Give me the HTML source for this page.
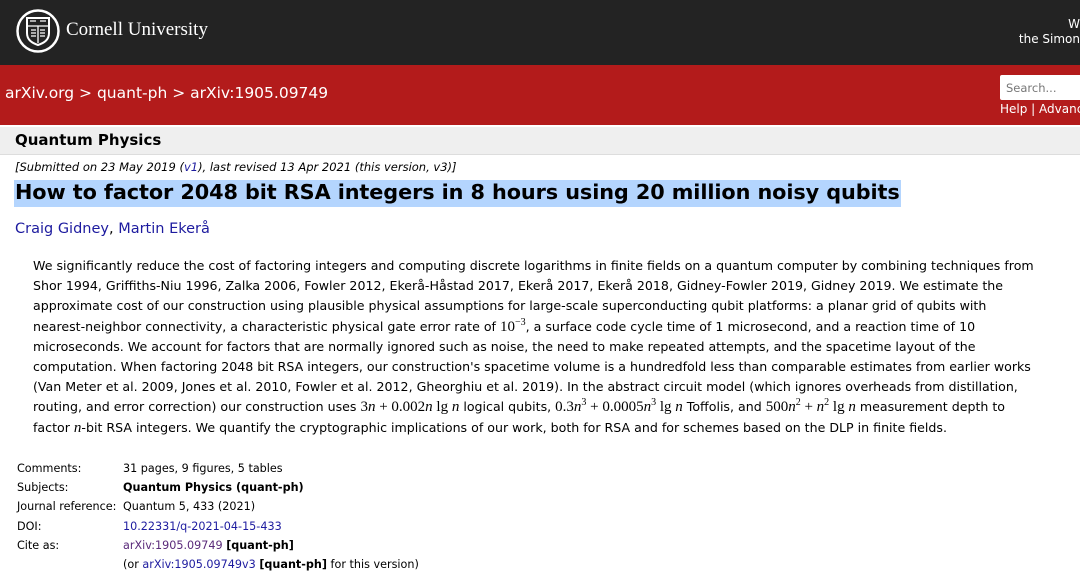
<!DOCTYPE html>
<html><head><meta charset="utf-8"><style>
body{margin:0;width:1080px;height:586px;overflow:hidden;background:#fff;font-family:"DejaVu Sans","Liberation Sans",sans-serif;color:#000}
.top{position:absolute;left:0;top:0;width:1080px;height:65px;background:#232323}
.red{position:absolute;left:0;top:65px;width:1080px;height:60px;background:#b31b1b}
.crumb{position:absolute;left:5px;top:84px;color:#fff;font-size:15.5px}
.qp{position:absolute;left:0;top:127px;width:1080px;height:27px;background:#efefef;border-bottom:1px solid #ddd}
.qp span{position:absolute;left:15px;top:4px;font-weight:bold;font-size:15px}
.ab{position:absolute;left:33px;top:256px;font-size:12.6px;line-height:20.2px;white-space:nowrap}
.m{font-family:'Liberation Serif',serif;font-size:15px;line-height:0}
sup{font-size:10px;line-height:0;vertical-align:0;position:relative;top:-6px}
a{color:#1d1b9f;text-decoration:none}
.meta{position:absolute;left:17px;top:459px;font-size:11.2px;line-height:19.2px}
.meta td{padding:0;vertical-align:top}
</style></head><body>
<div class="top">
<svg style="position:absolute;left:15px;top:8px" width="46" height="46" viewBox="0 0 46 46"><circle cx="23" cy="23" r="20.5" fill="none" stroke="#fff" stroke-width="2.5"/><path d="M12 10h22v15c0 7-5 10-11 12-6-2-11-5-11-12z" fill="none" stroke="#fff" stroke-width="2"/><path d="M12 18h22M23 18v17M15 13h6M25 13h6M16 22h5M16 25h5M16 28h5M25 22h5M25 25h5M25 28h5" stroke="#fff" stroke-width="1.3"/></svg>
<div style="position:absolute;left:66px;top:19px;color:#fff;font-family:'Liberation Serif',serif;font-size:19px">Cornell University</div>
<div style="position:absolute;right:0;top:17px;color:#fff;font-size:12px;text-align:right;line-height:15px;white-space:nowrap">W<br>the Simon</div>
</div>
<div class="red"></div>
<div class="crumb">arXiv.org &gt; quant-ph &gt; arXiv:1905.09749</div>
<div style="position:absolute;left:1000px;top:75px;width:90px;height:25px;background:#fff;border-radius:2px"><span style="position:absolute;left:6px;top:6px;font-size:11.5px;color:#777">Search...</span></div>
<div style="position:absolute;left:1000px;top:102px;color:#fff;font-size:12px;white-space:nowrap">Help | Advanced</div>
<div class="qp"><span>Quantum Physics</span></div>
<div style="position:absolute;left:15px;top:160px;font-size:11.5px;font-style:italic">[Submitted on 23 May 2019 (<a href="#">v1</a>), last revised 13 Apr 2021 (this version, v3)]</div>
<div style="position:absolute;left:14px;top:180px;height:27px;width:887px;background:#b4d5fe"></div>
<div style="position:absolute;left:15px;top:180px;font-size:20.8px;font-weight:bold;white-space:nowrap;letter-spacing:-0.1px">How to factor 2048 bit RSA integers in 8 hours using 20 million noisy qubits</div>
<div style="position:absolute;left:15px;top:221px;font-size:14.5px"><a href="#">Craig Gidney</a>, <a href="#">Martin Ekerå</a></div>
<div class="ab">We significantly reduce the cost of factoring integers and computing discrete logarithms in finite fields on a quantum computer by combining techniques from<br>Shor 1994, Griffiths-Niu 1996, Zalka 2006, Fowler 2012, Ekerå-Håstad 2017, Ekerå 2017, Ekerå 2018, Gidney-Fowler 2019, Gidney 2019. We estimate the<br>approximate cost of our construction using plausible physical assumptions for large-scale superconducting qubit platforms: a planar grid of qubits with<br>nearest-neighbor connectivity, a characteristic physical gate error rate of <span class="m">10<sup>−3</sup></span>, a surface code cycle time of 1 microsecond, and a reaction time of 10<br>microseconds. We account for factors that are normally ignored such as noise, the need to make repeated attempts, and the spacetime layout of the<br>computation. When factoring 2048 bit RSA integers, our construction's spacetime volume is a hundredfold less than comparable estimates from earlier works<br>(Van Meter et al. 2009, Jones et al. 2010, Fowler et al. 2012, Gheorghiu et al. 2019). In the abstract circuit model (which ignores overheads from distillation,<br>routing, and error correction) our construction uses <span class="m">3<i>n</i> + 0.002<i>n</i> lg <i>n</i></span> logical qubits, <span class="m">0.3<i>n</i><sup>3</sup> + 0.0005<i>n</i><sup>3</sup> lg <i>n</i></span> Toffolis, and <span class="m">500<i>n</i><sup>2</sup> + <i>n</i><sup>2</sup> lg <i>n</i></span> measurement depth to<br>factor <i class="m">n</i>-bit RSA integers. We quantify the cryptographic implications of our work, both for RSA and for schemes based on the DLP in finite fields.</div>
<table class="meta" cellspacing="0">
<tr><td style="width:106px">Comments:</td><td>31 pages, 9 figures, 5 tables</td></tr>
<tr><td>Subjects:</td><td><b>Quantum Physics (quant-ph)</b></td></tr>
<tr><td>Journal reference:</td><td>Quantum 5, 433 (2021)</td></tr>
<tr><td>DOI:</td><td><a href="#">10.22331/q-2021-04-15-433</a></td></tr>
<tr><td>Cite as:</td><td><a href="#" style="color:#5a2a7a">arXiv:1905.09749</a> <b>[quant-ph]</b></td></tr>
<tr><td></td><td>(or <a href="#">arXiv:1905.09749v3</a> <b>[quant-ph]</b> for this version)</td></tr>
</table>
</body></html>
